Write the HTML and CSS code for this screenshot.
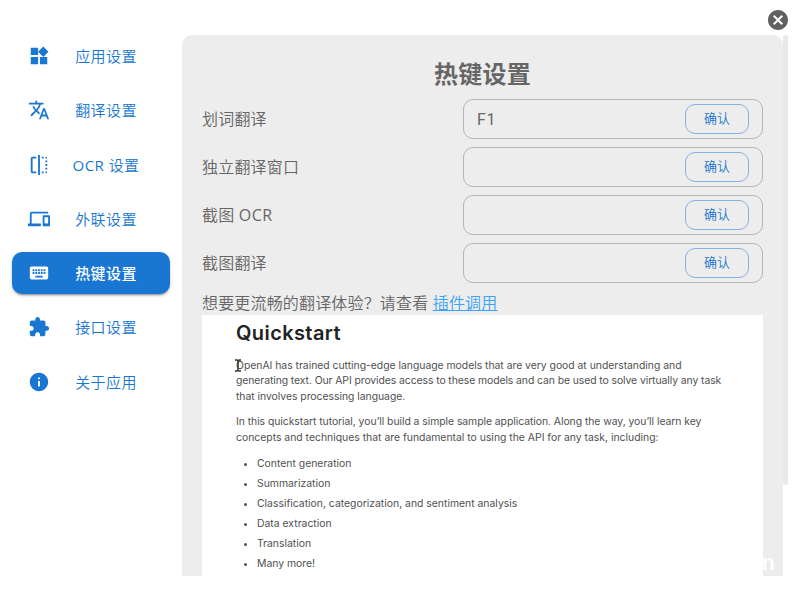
FILE: index.html
```html
<!DOCTYPE html>
<html lang="zh-CN">
<head>
    <meta charset="UTF-8">
    <meta name="viewport" content="width=device-width, initial-scale=1.0">
    <title>热键设置</title>
    <link rel="stylesheet" href="styles.css">
</head>
<body>
    <header class="titlebar">
        <svg class="close" viewBox="0 0 24 24"><path d="M12 2C6.47 2 2 6.47 2 12s4.47 10 10 10 10-4.47 10-10S17.53 2 12 2zm5 13.59L15.59 17 12 13.41 8.41 17 7 15.59 10.59 12 7 8.41 8.41 7 12 10.59 15.59 7 17 8.41 13.41 12 17 15.59z"/></svg>
    </header>

    <div class="main">
        <nav class="menu">
            <button class="menu-item">
                <svg viewBox="0 0 24 24"><path d="M13 13v8h8v-8h-8zM3 21h8v-8H3v8zM3 3v8h8V3H3zm13.66-1.31L11 7.34 16.66 13l5.66-5.66-5.66-5.65z"/></svg>
                <span>应用设置</span>
            </button>
            <button class="menu-item">
                <svg viewBox="0 0 24 24"><path d="M12.87 15.07l-2.54-2.51.03-.03c1.74-1.94 2.98-4.17 3.71-6.53H17V4h-7V2H8v2H1v1.99h11.17C11.5 7.92 10.44 9.75 9 11.35 8.07 10.32 7.3 9.19 6.69 8h-2c.73 1.63 1.73 3.17 2.98 4.56l-5.09 5.02L4 19l5-5 3.11 3.11.76-2.04zM18.5 10h-2L12 22h2l1.12-3h4.75L21 22h2l-4.5-12zm-2.62 7l1.62-4.33L19.12 17h-3.24z"/></svg>
                <span>翻译设置</span>
            </button>
            <button class="menu-item">
                <svg viewBox="0 0 24 24"><path d="M15 21h2v-2h-2v2zm4-12h2V7h-2v2zM3 5v14c0 1.1.9 2 2 2h4v-2H5V5h4V3H5c-1.1 0-2 .9-2 2zm16-2v2h2c0-1.1-.9-2-2-2zm-8 20h2V1h-2v22zm8-6h2v-2h-2v2zM15 5h2V3h-2v2zm4 8h2v-2h-2v2zm0 8c1.1 0 2-.9 2-2h-2v2z"/></svg>
                <span><em>OCR</em> 设置</span>
            </button>
            <button class="menu-item">
                <svg viewBox="0 0 24 24"><path d="M4 6h18V4H4c-1.1 0-2 .9-2 2v11H0v3h14v-3H4V6zm19 2h-6c-.55 0-1 .45-1 1v10c0 .55.45 1 1 1h6c.55 0 1-.45 1-1V9c0-.55-.45-1-1-1zm-1 9h-4v-7h4v7z"/></svg>
                <span>外联设置</span>
            </button>
            <button class="menu-item active">
                <svg viewBox="0 0 24 24"><path d="M20 5H4c-1.1 0-1.99.9-1.99 2L2 17c0 1.1.9 2 2 2h16c1.1 0 2-.9 2-2V7c0-1.1-.9-2-2-2zm-9 3h2v2h-2V8zm0 3h2v2h-2v-2zM8 8h2v2H8V8zm0 3h2v2H8v-2zm-1 2H5v-2h2v2zm0-3H5V8h2v2zm9 7H8v-2h8v2zm0-4h-2v-2h2v2zm0-3h-2V8h2v2zm3 3h-2v-2h2v2zm0-3h-2V8h2v2z"/></svg>
                <span>热键设置</span>
            </button>
            <button class="menu-item">
                <svg viewBox="0 0 24 24"><path d="M20.5 11H19V7c0-1.1-.9-2-2-2h-4V3.5C13 2.12 11.88 1 10.5 1S8 2.12 8 3.5V5H4c-1.1 0-1.99.9-1.99 2v3.8H3.5c1.49 0 2.7 1.21 2.7 2.7s-1.21 2.7-2.7 2.7H2V20c0 1.1.9 2 2 2h3.8v-1.5c0-1.49 1.21-2.7 2.7-2.7 1.49 0 2.7 1.21 2.7 2.7V22H17c1.1 0 2-.9 2-2v-4h1.5c1.38 0 2.5-1.12 2.5-2.5S21.88 11 20.5 11z"/></svg>
                <span>接口设置</span>
            </button>
            <button class="menu-item">
                <svg viewBox="0 0 24 24"><path d="M12 2C6.48 2 2 6.48 2 12s4.48 10 10 10 10-4.48 10-10S17.52 2 12 2zm1 15h-2v-6h2v6zm0-8h-2V7h2v2z"/></svg>
                <span>关于应用</span>
            </button>
        </nav>

        <section class="panel">
            <h2>热键设置</h2>
            <div class="row">
                <span class="label">划词翻译</span>
                <div class="field"><span class="value">F1</span><button class="confirm">确认</button></div>
            </div>
            <div class="row">
                <span class="label">独立翻译窗口</span>
                <div class="field"><span class="value"></span><button class="confirm">确认</button></div>
            </div>
            <div class="row">
                <span class="label">截图 <em>OCR</em></span>
                <div class="field"><span class="value"></span><button class="confirm">确认</button></div>
            </div>
            <div class="row">
                <span class="label">截图翻译</span>
                <div class="field"><span class="value"></span><button class="confirm">确认</button></div>
            </div>
            <p class="tip">想要更流畅的翻译体验？请查看 <a href="#">插件调用</a></p>

            <div class="demo">
                <h1>Quickstart</h1>
                <p>
                    <svg class="cursor" viewBox="0 0 8 13"><path d="M1 1h2l1 1 1-1h2M4 2v9M1 12h2l1-1 1 1h2"/></svg>
                    <span class="l1">OpenAI has trained cutting-edge language models that are very good at understanding and</span>
                    <span class="l2">generating text. Our API provides access to these models and can be used to solve virtually any task</span>
                    <span class="l3">that involves processing language.</span>
                </p>
                <p>
                    <span class="l4">In this quickstart tutorial, you’ll build a simple sample application. Along the way, you’ll learn key</span>
                    <span>concepts and techniques that are fundamental to using the API for any task, including:</span>
                </p>
                <ul>
                    <li>Content generation</li>
                    <li>Summarization</li>
                    <li>Classification, categorization, and sentiment analysis</li>
                    <li>Data extraction</li>
                    <li>Translation</li>
                    <li>Many more!</li>
                </ul>
                <span class="mark">n</span>
            </div>
        </section>
        <div class="scrollbar"></div>
    </div>
</body>
</html>
```

FILE: styles.css
```css
* {
    box-sizing: border-box;
}

body {
    margin: 0;
    height: 600px;
    overflow: hidden;
    background: #fff;
    color: #666;
    font-family: "Open Sans", "Noto Sans CJK SC", sans-serif;
    font-size: 16px;
}

button {
    font-family: inherit;
    background: none;
    border: none;
}

/* latin words inside the light chinese labels */
em {
    font-style: normal;
    font-weight: 400;
    letter-spacing: 0.5px;
}

.titlebar {
    display: flex;
    justify-content: flex-end;
    height: 35px;
    padding: 8px 10px 0 0;
}

.close {
    width: 24px;
    height: 24px;
    fill: #5f6163;
}

.main {
    display: flex;
    align-items: flex-start;
    height: 541px;
}

/* left menu */
.menu {
    display: flex;
    flex-direction: column;
    gap: 12px;
    width: 182px;
    padding: 0 12px;
}

.menu-item {
    display: flex;
    align-items: center;
    height: 42.25px;
    padding: 0 22px 0 16px;
    border-radius: 10px;
    color: #1976d2;
    font-size: 15px;
    font-weight: 350;
    letter-spacing: 0.43px;
    line-height: 26px;
}

.menu-item svg {
    width: 22px;
    height: 22px;
    fill: currentColor;
}

.menu-item span {
    flex: 1;
    margin-left: 14px;
    text-align: center;
    white-space: nowrap;
}

.menu-item.active {
    background: #1976d2;
    color: #fff;
    font-weight: 500;
    box-shadow: 0 3px 1px -2px rgba(0, 0, 0, 0.2), 0 2px 2px rgba(0, 0, 0, 0.14), 0 1px 5px rgba(0, 0, 0, 0.12);
}

/* settings panel */
.panel {
    width: 601px;
    height: 541px;
    padding: 21px 20px 0;
    overflow: hidden;
    background: #ededed;
    border-radius: 10px 10px 0 0;
}

.panel h2 {
    margin: 0 0 7px;
    font-size: 24px;
    letter-spacing: 0.3px;
    line-height: 36px;
    text-align: center;
}

.row {
    display: flex;
    align-items: center;
    justify-content: space-between;
    height: 40px;
    margin-bottom: 8px;
}

.label {
    padding-bottom: 2px;
    font-weight: 350;
    letter-spacing: 0.2px;
}

.field {
    display: flex;
    align-items: center;
    justify-content: space-between;
    width: 300px;
    height: 40px;
    padding: 0 13px;
    border: 1px solid #b5b5b5;
    border-radius: 10px;
    font-family: Roboto, sans-serif;
}

.value {
    letter-spacing: 0.6px;
}

.confirm {
    width: 64px;
    height: 30px;
    padding: 0 0 3px;
    border: 1px solid #83b2e2;
    border-radius: 10px;
    color: #1976d2;
    font-family: "Noto Sans CJK SC", sans-serif;
    font-size: 13px;
    font-weight: 350;
}

.tip {
    margin: 0;
    height: 24px;
    font-weight: 350;
    letter-spacing: 0.17px;
    line-height: 24px;
}

.tip a {
    color: #3ea2f5;
}

.demo {
    position: relative;
    height: 261px;
    padding: 4px 34px 0;
    background: #fff;
    color: #505050;
    font-family: Inter, sans-serif;
    font-size: 10.4px;
    line-height: 15.7px;
}

.demo h1 {
    margin: 0 0 10.7px;
    color: #222;
    font-size: 20px;
    font-weight: 600;
    letter-spacing: 0.4px;
    line-height: 28px;
}

.demo p {
    position: relative;
    margin: 0 0 9.6px;
}

.demo p span {
    display: block;
    width: max-content;
}

/* keep the line ends of the quoted page */
.demo .l1 {
    letter-spacing: -0.02px;
}

.demo .l2 {
    letter-spacing: -0.08px;
}

.demo .l3 {
    letter-spacing: -0.03px;
}

.demo .l4 {
    letter-spacing: -0.05px;
}

.demo ul {
    margin: -1px 0 0;
    padding-left: 21px;
    line-height: 20px;
}

.cursor {
    position: absolute;
    left: -2px;
    top: 1px;
    width: 8px;
    height: 13px;
    fill: none;
    stroke: #333;
    stroke-width: 1.5;
}

.mark {
    position: absolute;
    left: 560px;
    bottom: 3px;
    color: #fff;
    font-size: 21px;
    font-weight: 600;
    line-height: 20px;
}

.scrollbar {
    width: 5px;
    height: 450px;
    background: #e9e9eb;
    border-radius: 3px;
}
```
